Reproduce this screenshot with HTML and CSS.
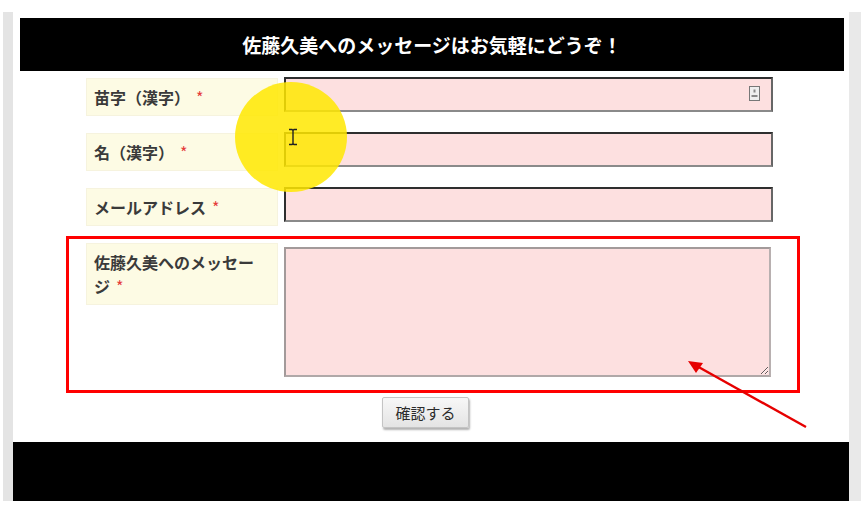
FILE: index.html
```html
<!DOCTYPE html>
<html lang="ja">
<head>
    <meta charset="UTF-8">
    <meta name="viewport" content="width=device-width, initial-scale=1.0">
    <title>お問い合わせ</title>
    <link rel="stylesheet" href="styles.css">
</head>
<body>
    <div class="frame">
        <!-- 見出し -->
        <header class="page-head">佐藤久美へのメッセージはお気軽にどうぞ！</header>

        <!-- フォーム -->
        <form class="contact">
            <div class="row">
                <label class="label">苗字（漢字）<span class="req">*</span></label>
                <div class="field">
                    <input class="input" type="text">
                    <svg class="autofill" width="11" height="15" viewBox="0 0 11 15">
                        <rect x="0.5" y="0.5" width="10" height="14" fill="#eee" stroke="#777"/>
                        <rect x="4.5" y="3.5" width="2" height="3" fill="#888"/>
                        <rect x="2.5" y="9" width="6" height="2" fill="#888"/>
                    </svg>
                </div>
            </div>
            <div class="row">
                <label class="label">名（漢字）<span class="req">*</span></label>
                <input class="input" type="text">
            </div>
            <div class="row">
                <label class="label">メールアドレス<span class="req">*</span></label>
                <input class="input" type="text">
            </div>
            <div class="row marked">
                <label class="label"><span>佐藤久美へのメッセー</span><br><span>ジ</span><span class="req">*</span></label>
                <textarea class="message"></textarea>
            </div>
            <button class="confirm-btn" type="button">確認する</button>
        </form>

        <footer class="page-foot"></footer>
    </div>

    <!-- 画面録画のカーソル表示と矢印 -->
    <div class="cursor-spot"></div>
    <svg class="ibeam" width="10" height="18" viewBox="0 0 10 18">
        <path d="M1 1.5h3l1 1 1-1h3M5 2.5v13M1 16.5h3l1-1 1 1h3" fill="none" stroke="#222" stroke-width="1.4"/>
    </svg>
    <svg class="arrow" width="130" height="75" viewBox="0 0 130 75">
        <line x1="125" y1="71" x2="14" y2="9" stroke="#e60000" stroke-width="2.4"/>
        <polygon points="7,5 22,7 15,17" fill="#e60000"/>
    </svg>
</body>
</html>
```

FILE: styles.css
```css
/* 全体 */
body {
    margin: 0;
    background-color: #fff;
    font-family: "Noto Sans CJK JP", "Noto Sans", sans-serif;
    color: #333;
}

.frame {
    margin: 12px 0 0 3px;
    padding-top: 6px;
    width: 836px;
    border-left: 10px solid #e4e4e4;
    border-right: 12px solid #e9e9e9;
}

/* 見出し */
.page-head {
    margin: 0 5px 0 7px;
    height: 53px;
    background-color: #000;
    color: #fff;
    font-size: 19px;
    font-weight: bold;
    display: flex;
    align-items: center;
    justify-content: center;
}

/* フォーム */
.contact {
    padding-top: 6px;
}
.row {
    display: flex;
    align-items: flex-start;
    gap: 6px;
    margin: 0 0 16px 73px;
}
.label {
    box-sizing: border-box;
    width: 192px;
    margin-top: 1px;
    padding: 6px 18px 6px 7px;
    line-height: 24px;
    font-size: 16px;
    font-weight: bold;
    color: #3a3a3a;
    background-color: #fdfbe4;
    border: 1px solid #f6f3de;
}
.req {
    color: #e53b3b;
    font-weight: normal;
    margin-left: 6px;
}
.field {
    position: relative;
}
.input {
    box-sizing: border-box;
    width: 489px;
    height: 35px;
    margin: 0;
    background-color: #fde0e0;
    border: 2px solid;
    border-color: #2e2e2e #666 #8a8a8a #2e2e2e;
}
.autofill {
    position: absolute;
    right: 13px;
    top: 9px;
}

/* 赤枠で囲んだ行 */
.row.marked {
    box-sizing: border-box;
    width: 734px;
    margin: -6px 0 0 53px;
    padding: 4px 0 13px 17px;
    border: 3px solid #f00;
}
.row.marked .label {
    margin-top: 0;
}
.message {
    box-sizing: border-box;
    width: 487px;
    height: 130px;
    margin: 4px 0 0;
    background-color: #fde0e0;
    border: 2px solid;
    border-color: #a39a9a #b8b0b0 #b0a8a8 #a39a9a;
}

/* ボタン */
.confirm-btn {
    display: block;
    margin: 4px 0 0 369px;
    width: 87px;
    height: 31px;
    font-family: "Noto Sans CJK JP", sans-serif;
    font-size: 15px;
    color: #2a2a2a;
    background: linear-gradient(#f7f7f7, #e4e4e4);
    border: 1px solid #c4c4c4;
    border-radius: 2px;
    box-shadow: 1px 2px 2px rgba(0, 0, 0, 0.3);
}

/* フッター */
.page-foot {
    margin-top: 14px;
    height: 59px;
    background-color: #000;
}

/* 重ねて表示するもの */
.cursor-spot {
    position: absolute;
    left: 235px;
    top: 82px;
    width: 112px;
    height: 110px;
    border-radius: 50%;
    background-color: rgba(255, 232, 0, 0.85);
}
.ibeam {
    position: absolute;
    left: 288px;
    top: 128px;
}
.arrow {
    position: absolute;
    left: 681px;
    top: 356px;
}
```
